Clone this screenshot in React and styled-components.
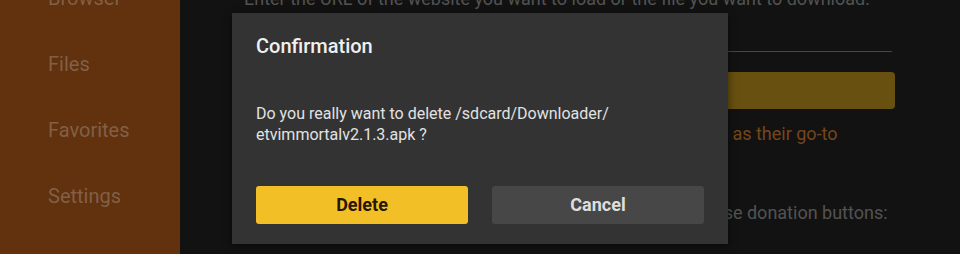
import React from "react";
import styled, { createGlobalStyle } from "styled-components";

const GlobalStyle = createGlobalStyle`
  html, body {
    margin: 0;
    padding: 0;
    background: #131313;
    font-family: Roboto, "Noto Sans", "Liberation Sans", sans-serif;
  }
  #root {
    height: 254px;
    overflow: hidden;
  }
`;

const Screen = styled.div`
  position: relative;
  display: flex;
  width: 960px;
  height: 254px;
  overflow: hidden;
  background: #131313;
`;

const Sidebar = styled.nav`
  flex: 0 0 180px;
  background: #66330f;
  display: flex;
  flex-direction: column;
  margin-top: -35px;
`;

const NavItem = styled.div`
  height: 66px;
  line-height: 66px;
  padding-left: 48px;
  font-size: 20px;
  color: #88644a;
  white-space: nowrap;
`;

const Main = styled.main`
  flex: 1;
  display: flex;
  flex-direction: column;
  margin-top: -13px;
  padding-left: 64px;
  padding-right: 65px;
`;

const Line = styled.p`
  margin: ${(p) => p.$mt || 0}px 0 0;
  font-size: 18px;
  line-height: 24px;
  white-space: nowrap;
  color: ${(p) => p.$color || "#575757"};
`;

const Field = styled.div`
  height: 40px;
  border-bottom: 1px solid #4a4a4a;
  margin-right: 3px;
`;

const GoBar = styled.div`
  margin-top: 20px;
  height: 37px;
  border-radius: 4px;
  background: #6c5411;
`;

const Overlay = styled.div`
  position: absolute;
  inset: 0;
  padding-top: 2px;
  display: flex;
  align-items: center;
  justify-content: center;
  background: rgba(0, 0, 0, 0.04);
`;

const Dialog = styled.div`
  width: 496px;
  box-sizing: border-box;
  padding: 21px 24px 20px;
  background: #333333;
  box-shadow: 0 2px 8px rgba(0, 0, 0, 0.5);
  display: flex;
  flex-direction: column;
`;

const Title = styled.h2`
  margin: 0;
  font-size: 20px;
  line-height: 24px;
  font-weight: 500;
  color: #f0f0f0;
`;

const Message = styled.p`
  margin: 45px 0 0;
  font-size: 16px;
  line-height: 21px;
  color: #e2e2e2;
`;

const Actions = styled.div`
  margin-top: 41px;
  display: grid;
  grid-template-columns: 1fr 1fr;
  gap: 24px;
`;

const Button = styled.button`
  height: 38px;
  border: none;
  border-radius: 3px;
  font-family: inherit;
  font-size: 18px;
  font-weight: 700;
  cursor: pointer;
  background: ${(p) => (p.$primary ? "#f2c026" : "#474747")};
  color: ${(p) => (p.$primary ? "#2a1608" : "#dedede")};
`;

export default function App() {
  return (
    <>
      <GlobalStyle />
      <Screen>
        <Sidebar>
          <NavItem>Browser</NavItem>
          <NavItem>Files</NavItem>
          <NavItem>Favorites</NavItem>
          <NavItem>Settings</NavItem>
          <NavItem>Help</NavItem>
        </Sidebar>
        <Main>
          <Line>Enter the URL of the website you want to load or the file you want to download:</Line>
          <Field />
          <GoBar />
          <Line $mt={13} $color="#7a4a1c">
            Downloader is trusted by millions of people around the world as their go-to
          </Line>
          <Line $mt={55}>
            If you would like to support this developer, please do use these donation buttons:
          </Line>
        </Main>
        <Overlay>
          <Dialog role="dialog">
            <Title>Confirmation</Title>
            <Message>
              Do you really want to delete /sdcard/Downloader/<wbr />etvimmortalv2.1.3.apk ?
            </Message>
            <Actions>
              <Button $primary>Delete</Button>
              <Button>Cancel</Button>
            </Actions>
          </Dialog>
        </Overlay>
      </Screen>
    </>
  );
}
